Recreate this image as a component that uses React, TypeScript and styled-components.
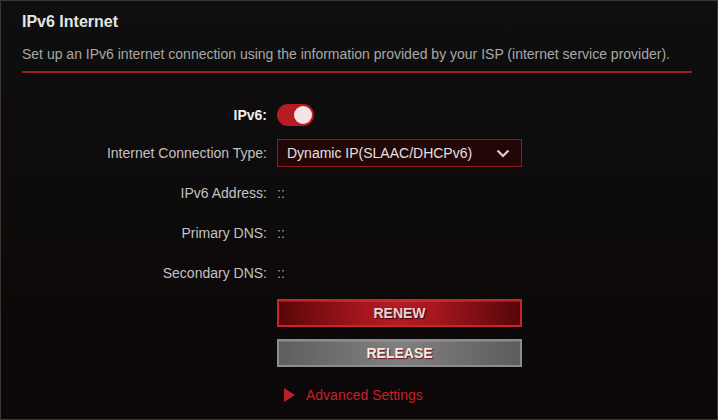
import { createGlobalStyle } from "styled-components";
import styled from "styled-components";

const GlobalStyle = createGlobalStyle`
  html, body {
    margin: 0;
    padding: 0;
    background: #0c0809;
  }
  * { box-sizing: border-box; }
`;

const Page = styled.div`
  width: 718px;
  height: 420px;
  border: 1px solid #3b3733;
  background: linear-gradient(180deg, #0f0f0f 0%, #0e0c0c 30%, #0c0708 100%);
  font-family: "Liberation Sans", Arial, sans-serif;
  padding: 0 25px 0 21px;
  overflow: hidden;
`;

const Title = styled.h2`
  margin: 0;
  padding-top: 11px;
  height: 45px;
  font-size: 16px;
  line-height: 19px;
  font-weight: bold;
  color: #e4e4e4;
`;

const Description = styled.p`
  margin: 0;
  font-size: 14px;
  line-height: 16px;
  color: #a8a8a8;
  padding-bottom: 9px;
  border-bottom: 2px solid #a31b22;
`;

const Form = styled.div`
  display: flex;
  flex-direction: column;
  padding-top: 28px;
`;

const Row = styled.div<{ $gap?: number }>`
  display: grid;
  grid-template-columns: 245px 245px;
  column-gap: 10px;
  align-items: center;
  height: 28px;
  margin-top: ${(p) => p.$gap ?? 0}px;
`;

const Label = styled.span<{ $strong?: boolean }>`
  text-align: right;
  font-size: 14px;
  color: ${(p) => (p.$strong ? "#f0f0f0" : "#c2c2c2")};
  font-weight: ${(p) => (p.$strong ? "bold" : "normal")};
`;

const Value = styled.span`
  font-size: 14px;
  color: #a8a8a8;
`;

const Toggle = styled.div`
  width: 37px;
  height: 22px;
  border-radius: 11px;
  background: #b71c25;
  position: relative;
  &::after {
    content: "";
    position: absolute;
    right: 2px;
    top: 2px;
    width: 18px;
    height: 18px;
    border-radius: 50%;
    background: #f6e3e5;
  }
`;

const Select = styled.div`
  height: 28px;
  border: 1px solid #8e1a1c;
  background: #230606;
  display: flex;
  align-items: center;
  justify-content: space-between;
  padding: 0 11px 0 9px;
  font-size: 14px;
  color: #e2e2e2;
`;

const Button = styled.button<{ $variant: "red" | "gray" }>`
  grid-column: 2;
  height: 28px;
  border: 2px solid ${(p) => (p.$variant === "red" ? "#c4262c" : "#8c8c8c")};
  background: ${(p) =>
    p.$variant === "red"
      ? "linear-gradient(90deg, #5a0608 0%, #a5161d 35%, #b21d23 50%, #a5161d 65%, #56060a 100%)"
      : "linear-gradient(90deg, #5e5e5e 0%, #7a7a7a 40%, #7f7f7f 50%, #7a7a7a 60%, #5c5c5c 100%)"};
  color: ${(p) => (p.$variant === "red" ? "#e2d4d6" : "#eeeeee")};
  font-family: "Liberation Sans", Arial, sans-serif;
  font-weight: bold;
  font-size: 14px;
  text-shadow: ${(p) =>
    p.$variant === "red" ? "1px 1px 1px #3a0204" : "1px 1px 1px #7a1216"};
  box-shadow: inset 0 1px 0 rgba(255, 255, 255, 0.12);
  cursor: pointer;
  padding: 0;
`;

const Advanced = styled.div`
  grid-column: 2;
  display: flex;
  align-items: center;
  gap: 11px;
  padding-left: 7px;
  font-size: 14px;
  color: #c8202a;
`;

const Chevron = () => (
  <svg width="14" height="9" viewBox="0 0 14 9">
    <path d="M1.5 1.5 L7 7 L12.5 1.5" fill="none" stroke="#d8d2d2" strokeWidth="2.2" />
  </svg>
);

const Triangle = () => (
  <svg width="11" height="14" viewBox="0 0 11 14">
    <path d="M0 0 L11 7 L0 14 Z" fill="#b8202a" />
  </svg>
);

export default function App() {
  return (
    <Page>
      <GlobalStyle />
      <Title>IPv6 Internet</Title>
      <Description>
        Set up an IPv6 internet connection using the information provided by your ISP (internet service provider).
      </Description>
      <Form>
        <Row>
          <Label $strong>IPv6:</Label>
          <Toggle />
        </Row>
        <Row $gap={10}>
          <Label>Internet Connection Type:</Label>
          <Select>
            <span>Dynamic IP(SLAAC/DHCPv6)</span>
            <Chevron />
          </Select>
        </Row>
        <Row $gap={12}>
          <Label>IPv6 Address:</Label>
          <Value>::</Value>
        </Row>
        <Row $gap={12}>
          <Label>Primary DNS:</Label>
          <Value>::</Value>
        </Row>
        <Row $gap={12}>
          <Label>Secondary DNS:</Label>
          <Value>::</Value>
        </Row>
        <Row $gap={12}>
          <Button $variant="red">RENEW</Button>
        </Row>
        <Row $gap={12}>
          <Button $variant="gray">RELEASE</Button>
        </Row>
        <Row $gap={14}>
          <Advanced>
            <Triangle />
            <span>Advanced Settings</span>
          </Advanced>
        </Row>
      </Form>
    </Page>
  );
}
